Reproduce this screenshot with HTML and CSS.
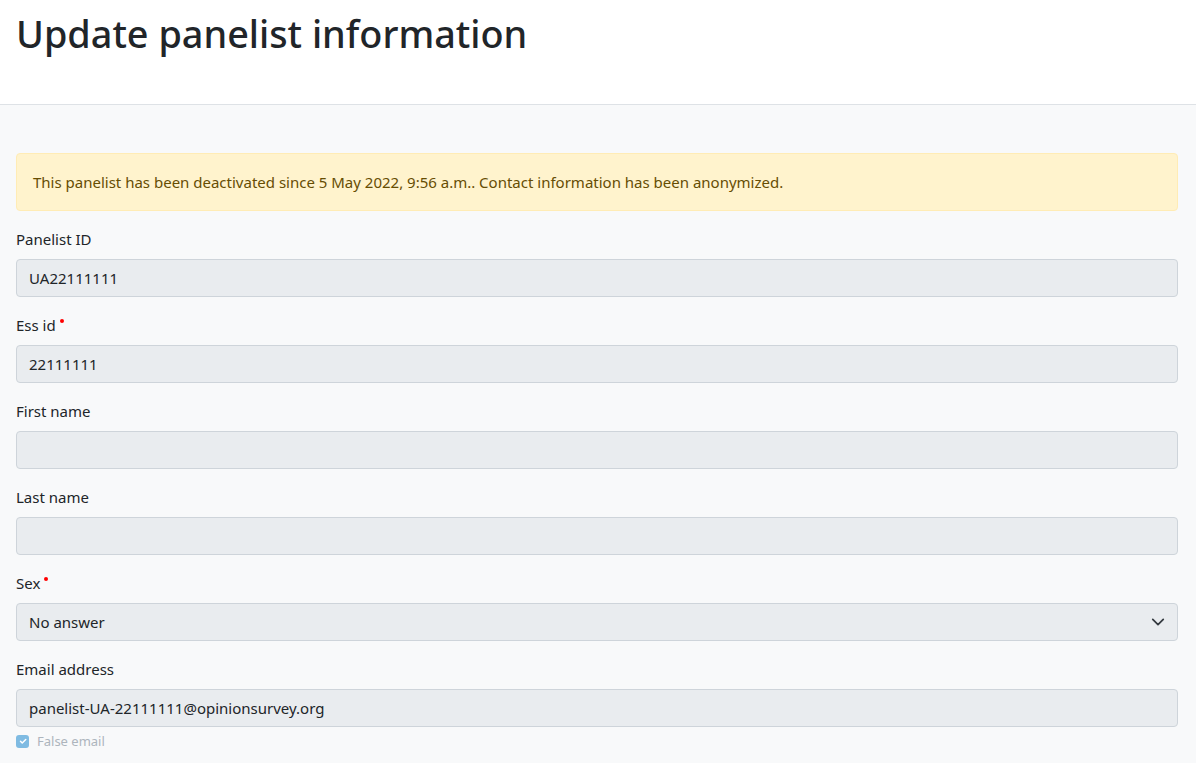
FILE: index.html
```html
<!DOCTYPE html>
<html lang="en">
<head>
<meta charset="utf-8">
<title>Update panelist information</title>
<link rel="stylesheet" href="styles.css">
</head>
<body>
<header class="page-header">
  <h1 class="page-title">Update panelist information</h1>
</header>
<main class="content">
  <div class="alert">This panelist has been deactivated since 5 May 2022, 9:56 a.m.. Contact information has been anonymized.</div>
  <div class="field">
    <label class="label">Panelist ID</label>
    <div class="input">UA22111111</div>
  </div>
  <div class="field">
    <label class="label required">Ess id</label>
    <div class="input">22111111</div>
  </div>
  <div class="field">
    <label class="label">First name</label>
    <div class="input"></div>
  </div>
  <div class="field">
    <label class="label">Last name</label>
    <div class="input"></div>
  </div>
  <div class="field">
    <label class="label required">Sex</label>
    <div class="input select">
      <span>No answer</span>
      <svg class="chevron" width="16" height="16" viewBox="0 0 16 16"><path d="M2 5l6 6 6-6" fill="none" stroke="#343a40" stroke-width="2" stroke-linecap="round" stroke-linejoin="round"/></svg>
    </div>
  </div>
  <div class="field">
    <label class="label">Email address</label>
    <div class="input">panelist-UA-22111111@opinionsurvey.org</div>
    <div class="check">
      <span class="checkbox"><svg width="10" height="10" viewBox="0 0 20 20"><path d="M5 10.5l3.5 3.5 7-7" fill="none" stroke="#fff" stroke-width="3" stroke-linecap="round" stroke-linejoin="round"/></svg></span>
      <span class="check-label">False email</span>
    </div>
  </div>
</main>
</body>
</html>
```
FILE: styles.css
```css
* { box-sizing: border-box; }
html, body { margin: 0; padding: 0; }
body {
  font-family: "Noto Sans", "Open Sans", sans-serif;
  font-size: 15px;
  line-height: 24px;
  color: #212529;
  background: #f8f9fa;
  height: 763px;
  overflow: hidden;
}
.page-header {
  background: #fff;
  height: 105px;
  border-bottom: 1px solid #dee2e6;
  padding: 8px 16px 0;
}
.page-title {
  margin: 0;
  font-size: 37.8px;
  line-height: 52px;
  font-weight: 500;
  letter-spacing: 0;
}
.content {
  padding: 48px 18px 0 16px;
}
.alert {
  background: #fff3cd;
  border: 1px solid #ffecb5;
  color: #664d03;
  border-radius: 4px;
  padding: 16px 16px;
  height: 58px;
  margin-bottom: 16px;
}
.field { margin-bottom: 16px; }
.label {
  display: block;
  margin-bottom: 8px;
}
.required::after {
  content: "";
  display: inline-block;
  width: 4px;
  height: 4px;
  border-radius: 50%;
  background: #ff0000;
  margin-left: 4px;
  vertical-align: 8px;
}
.input {
  height: 38px;
  background: #e9ecef;
  border: 1px solid #ced4da;
  border-radius: 4px;
  padding: 6px 12px;
  color: #212529;
}
.select {
  display: flex;
  align-items: center;
  justify-content: space-between;
  padding-right: 12px;
}
.chevron { width: 14px; height: 14px; margin-right: 0; }
.check {
  display: flex;
  align-items: center;
  gap: 8px;
  margin-top: 6px;
  font-size: 13px;
  line-height: 16px;
}
.checkbox {
  width: 13px;
  height: 13px;
  border-radius: 3px;
  background: #7fbbe2;
  display: flex;
  align-items: center;
  justify-content: center;
}
.check-label { color: #adb5bd; }
```
